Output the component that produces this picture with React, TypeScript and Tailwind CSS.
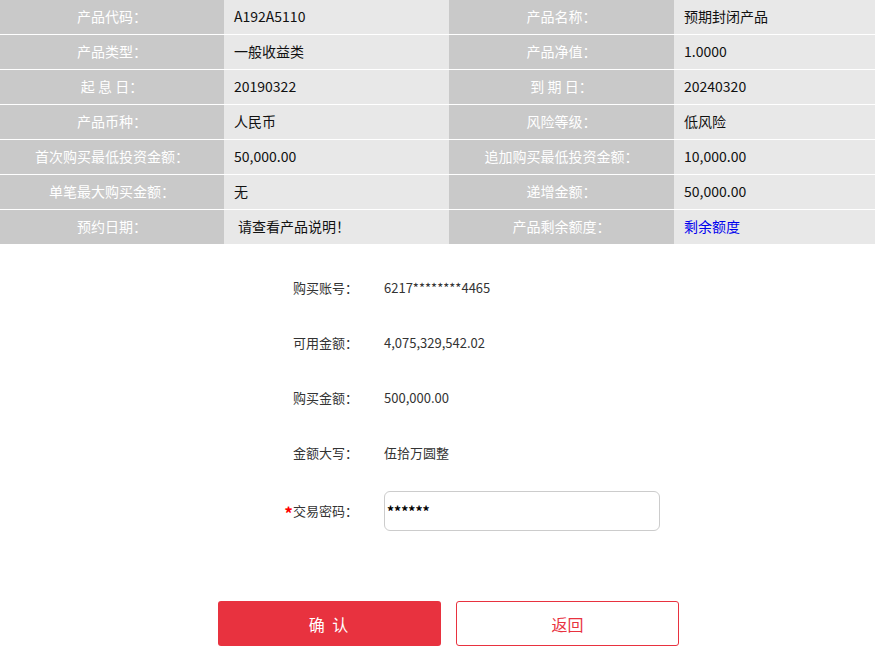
import React from "react";

const font = { fontFamily: '"Noto Sans CJK SC", "Noto Sans", sans-serif' };

const rows: [string, React.ReactNode, string, React.ReactNode][] = [
  ["产品代码：", "A192A5110", "产品名称：", "预期封闭产品"],
  ["产品类型：", "一般收益类", "产品净值：", "1.0000"],
  ["起 息 日：", "20190322", "到 期 日：", "20240320"],
  ["产品币种：", "人民币", "风险等级：", "低风险"],
  ["首次购买最低投资金额：", "50,000.00", "追加购买最低投资金额：", "10,000.00"],
  ["单笔最大购买金额：", "无", "递增金额：", "50,000.00"],
  [
    "预约日期：",
    <span className="pl-[4px]">请查看产品说明！</span>,
    "产品剩余额度：",
    <span className="text-[#0000ee]">剩余额度</span>,
  ],
];

const formRows = [
  ["购买账号：", "6217********4465"],
  ["可用金额：", "4,075,329,542.02"],
  ["购买金额：", "500,000.00"],
  ["金额大写：", "伍拾万圆整"],
];

export default function App() {
  return (
    <div className="w-[875px] h-[651px] overflow-hidden bg-white" style={font}>
      <div className="flex flex-col">
        {rows.map((r, i) => (
          <div
            key={i}
            className="grid grid-cols-[224px_225px_225px_1fr] h-[35px] border-b border-white text-[14px] leading-[33px]"
          >
            <div className="bg-[#c9c9c9] text-white text-center">{r[0]}</div>
            <div className="bg-[#e8e8e8] text-[#111] pl-[10px]">{r[1]}</div>
            <div className="bg-[#c9c9c9] text-white text-center">{r[2]}</div>
            <div className="bg-[#e8e8e8] text-[#111] pl-[10px]">{r[3]}</div>
          </div>
        ))}
      </div>
      <div className="flex flex-col pt-[15px]">
        {formRows.map(([l, v]) => (
          <div key={l} className="flex items-center h-[55px] text-[13px] text-[#333]">
            <div className="w-[358px] text-right">{l}</div>
            <div className="ml-[26px]">{v}</div>
          </div>
        ))}
        <div className="flex items-center h-[40px] mt-[11px] text-[13px] text-[#333]">
          <div className="w-[358px] flex items-center justify-end">
            <span className="text-[#ff0000] text-[17px] font-bold leading-none mt-[3px]">*</span>
            <span>交易密码：</span>
          </div>
          <div className="ml-[26px] w-[276px] h-[40px] border border-[#cccccc] rounded-[6px] flex items-center pl-[2px] text-[14px] text-black font-bold">
            ******
          </div>
        </div>
        <div className="flex gap-[15px] pl-[218px] mt-[70px]">
          <button className="w-[223px] h-[45px] bg-[#e8323f] text-white text-[16px] rounded-[3px] tracking-[2px]">
            确 认
          </button>
          <button className="w-[223px] h-[45px] bg-white border border-[#e8323f] text-[#e8323f] text-[16px] rounded-[3px]">
            返回
          </button>
        </div>
      </div>
    </div>
  );
}
